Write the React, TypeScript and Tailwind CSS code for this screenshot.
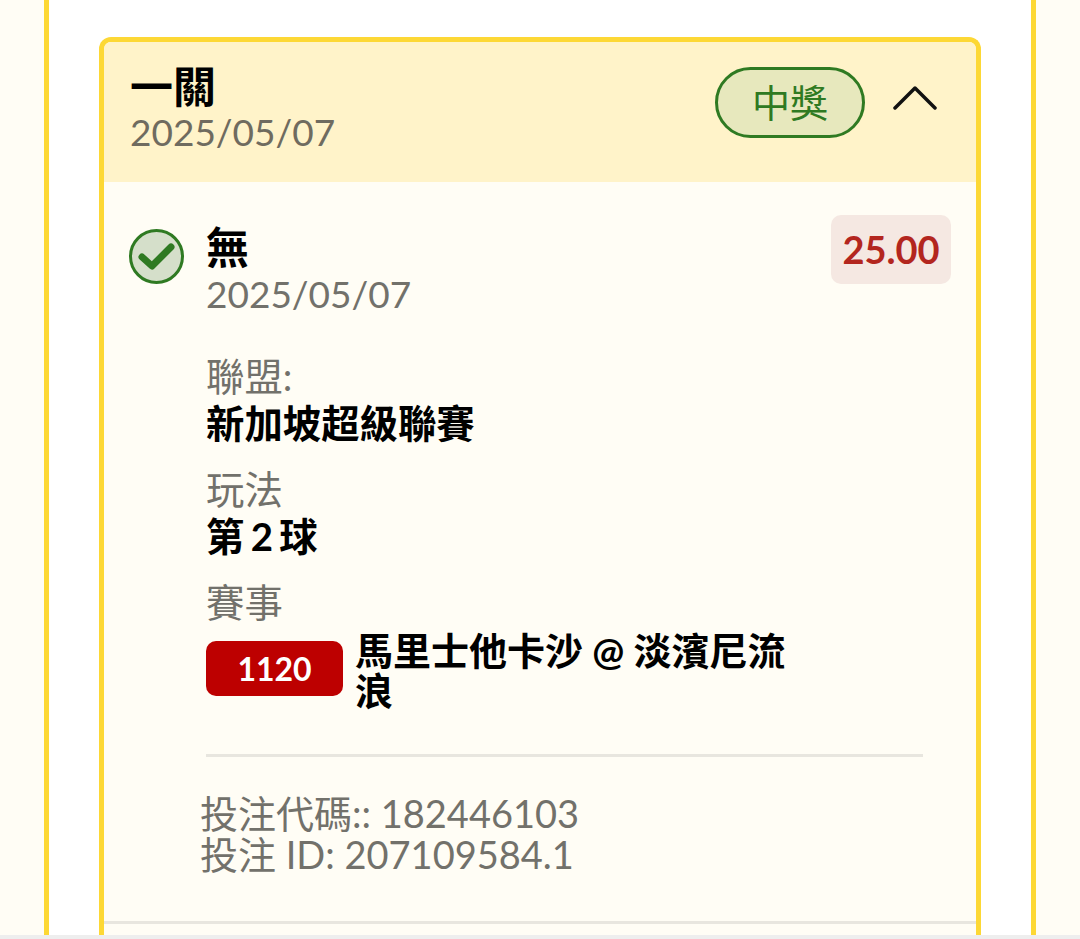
const cjk = "font-['Lato','Noto_Sans_CJK_TC',sans-serif]";

function CheckBadge() {
  return (
    <svg width="55" height="55" viewBox="0 0 55 55" className="shrink-0">
      <circle cx="27.5" cy="27.5" r="26" fill="#d5dfca" stroke="#2f7a22" strokeWidth="3" />
      <path d="M13 28 L23 37 L42 18" fill="none" stroke="#2f7a22" strokeWidth="7" strokeLinecap="round" strokeLinejoin="round" />
    </svg>
  );
}

function Field({ label, children }: { label: string; children: React.ReactNode }) {
  return (
    <div>
      <div className="text-[38.4px] leading-[47px] text-[#72716b]">{label}</div>
      {children}
    </div>
  );
}

export default function App() {
  return (
    <div className={`flex h-[939px] w-[1080px] flex-col overflow-hidden bg-[#fffdf5] ${cjk}`}>
      <div className="flex min-h-0 flex-1 pl-[44px] pr-[44px]">
        <div className="min-h-0 flex-1 overflow-hidden border-x-[5px] border-[#fdd835] bg-white px-[50px] pt-[37px]">
          <div className="w-[882px] rounded-t-[12px] border-x-[5px] border-t-[5px] border-[#fdd835] bg-[#fffdf5]">
            <header className="flex h-[140px] items-start justify-between rounded-t-[7px] bg-[#fff3c9] pl-[26px] pr-[39px]">
              <div className="pt-[18px]">
                <div className="text-[43px] leading-[54px] font-bold text-black">一關</div>
                <div className="-mt-[4px] text-[37px] leading-[44px] text-[#6f6b5f]">2025/05/07</div>
              </div>
              <div className="flex items-center gap-[28px] pt-[25px]">
                <span className="flex h-[71px] w-[150px] items-center justify-center rounded-full border-[3px] border-[#2f7a22] bg-[#e7e8bd] text-[38px] text-[#2f7a22]">
                  中獎
                </span>
                <svg width="44" height="24" viewBox="0 0 44 24" fill="none" stroke="#111" strokeWidth="3.5" strokeLinecap="round" strokeLinejoin="round" className="mb-[9px]">
                  <path d="M2 22 L22 2 L42 22" />
                </svg>
              </div>
            </header>

            <div className="flex items-start pl-[25px] pr-[25px] pt-[33px]">
              <div className="pt-[14px]">
                <CheckBadge />
              </div>
              <div className="ml-[22px] min-w-0 flex-1">
                <div className="flex items-start justify-between">
                  <div className="pt-[8px]">
                    <div className="text-[43px] leading-[50px] font-bold text-black">無</div>
                    <div className="-mt-[1px] text-[37px] leading-[44px] text-[#72716b]">2025/05/07</div>
                  </div>
                  <span className="flex w-[120px] items-center justify-center rounded-[10px] bg-[#f5e8e2] py-[11px] text-[38px] leading-[47px] font-bold text-[#b3261e]">
                    25.00
                  </span>
                </div>

                <div className="mt-[37px] flex flex-col gap-[19px]">
                  <Field label="聯盟:">
                    <div className="text-[38.4px] leading-[47px] font-bold text-black">新加坡超級聯賽</div>
                  </Field>
                  <Field label="玩法">
                    <div className="text-[38.4px] leading-[47px] font-bold text-black [word-spacing:-3px]">第 2 球</div>
                  </Field>
                  <Field label="賽事">
                    <div className="flex items-start gap-[12px] pt-[4px]">
                      <span className="mt-[11px] flex h-[55px] w-[137px] shrink-0 items-center justify-center rounded-[10px] bg-[#bd0000] text-[32px] font-bold text-white">
                        1120
                      </span>
                      <span className="w-[440px] text-[38px] leading-[40px] font-bold text-black">馬里士他卡沙 @ 淡濱尼流浪</span>
                    </div>
                  </Field>
                </div>

                <div className="mt-[44px] mr-[28px] border-t-[3px] border-[#e8e6df]" />
                <div className="-ml-[6px] pt-[36px] text-[38px] leading-[41px] text-[#72716b]">
                  <div>投注代碼:: 182446103</div>
                  <div>投注 ID: 207109584.1</div>
                </div>
              </div>
            </div>
            <div className="mt-[46px] border-t-[3px] border-[#e8e6df]" />
            <div className="h-[20px]" />
          </div>
        </div>
      </div>
      <div className="h-[4px] shrink-0 bg-[#eeeeee]" />
    </div>
  );
}
